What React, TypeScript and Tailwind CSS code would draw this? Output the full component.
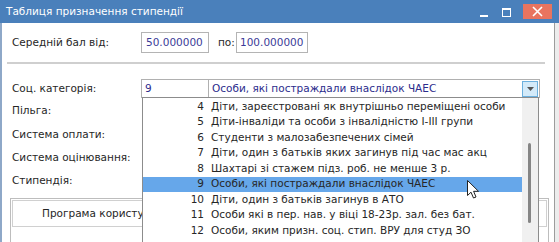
import React from "react";

const items: [string, string][] = [
  ["4", "Діти, зареєстровані як внутрішньо переміщені особи"],
  ["5", "Діти-інваліди та особи з інвалідністю І-ІІІ групи"],
  ["6", "Студенти з малозабезпечених сімей"],
  ["7", "Діти, один з батьків яких загинув під час мас акц"],
  ["8", "Шахтарі зі стажем підз. роб. не менше 3 р."],
  ["9", "Особи, які постраждали внаслідок ЧАЕС"],
  ["10", "Діти, один з батьків загинув в АТО"],
  ["11", "Особи які в пер. нав. у віці 18-23р. зал. без бат."],
  ["12", "Особи, яким призн. соц. стип. ВРУ для студ ЗО"],
];

export default function App() {
  return (
    <div
      className="relative w-[559px] h-[242px] overflow-hidden bg-white text-[10.5px] text-[#262626]"
      style={{ fontFamily: '"DejaVu Sans", Verdana, sans-serif' }}
    >
      {/* Title bar */}
      <div className="flex h-[23px] items-center bg-[#4a80bb] pl-[6px] text-white">
        <span className="flex-1 text-[10.5px]">Таблиця призначення стипендії</span>
        <div className="flex h-full items-start">
          <div className="mt-[15px] h-[2px] w-[8px] bg-white" />
          <div className="ml-[14px] mt-[8px] h-[9px] w-[9px] border-[1.5px] border-t-[2px] border-white" />
          <div className="ml-[12px] mt-[4px] flex h-[15px] w-[29px] items-center justify-center bg-[#e8745f]">
            <svg width="11" height="11" viewBox="0 0 11 11">
              <path d="M1 1 L10 10 M10 1 L1 10" stroke="white" strokeWidth="1.6" />
            </svg>
          </div>
          <div className="w-[7px]" />
        </div>
      </div>

      {/* Window body */}
      <div className="flex h-[219px]">
        <div className="w-[2px] bg-[#8ea8c8]" />
        <div className="relative flex-1 border-r border-[#9c9c9c]">
          {/* Row 1 */}
          <div className="mt-[9px] flex h-[21px] items-center pl-[10px]">
            <span className="w-[129px]">Середній бал від:</span>
            <div className="flex h-[21px] w-[68px] items-center border border-[#b4b4b4] pl-[4px] text-[#3b3b98]">
              50.000000
            </div>
            <span className="ml-[9px] w-[17px] whitespace-nowrap">по:</span>
            <div className="ml-[1px] flex h-[21px] w-[72px] items-center overflow-hidden whitespace-nowrap border border-[#b4b4b4] pl-[3px] text-[#3b3b98]">
              100.000000
            </div>
          </div>

          {/* Separator */}
          <div className="ml-[5px] mt-[9px] h-[2px] w-[538px] bg-[#cfcfcf]" />

          {/* Soc category */}
          <div className="mt-[15px] flex h-[19px] items-center pl-[10px]">
            <span className="w-[129px]">Соц. категорія:</span>
            <div className="flex h-[19px] w-[68px] items-center border border-[#b0b0b0] pl-[3px] text-[#2c2c8c]">
              9
            </div>
            <div className="-ml-px flex h-[19px] w-[332px] items-center border border-[#b0b0b0] pl-[3px] text-[#2c2c8c]">
              <span className="flex-1">Особи, які постраждали внаслідок ЧАЕС</span>
              <div className="mr-px flex h-[16px] w-[16px] items-center justify-center border border-[#6cb0de] bg-[#d3eaf9]">
                <svg width="7" height="4" viewBox="0 0 7 4">
                  <path d="M0 0 L7 0 L3.5 4 Z" fill="#555" />
                </svg>
              </div>
            </div>
          </div>

          <div className="flex flex-col pl-[10px]">
            <div className="mt-[3px] flex h-[20px] items-center">Пільга:</div>
            <div className="mt-[4px] flex h-[20px] items-center">Система оплати:</div>
            <div className="mt-[3px] flex h-[20px] items-center">Система оцінювання:</div>
            <div className="mt-[3px] flex h-[20px] items-center">Стипендія:</div>
          </div>

          {/* Table box */}
          <div className="ml-[8px] mt-[7px] h-[60px] w-[539px] border border-[#bdbdbd] p-px">
            <div className="flex h-[27px] items-center border border-[#d0d0d0] pl-[29px]">
              Програма користувача
            </div>
          </div>
        </div>
        <div className="w-[4px] bg-[#ececec]" />
      </div>

      {/* Dropdown list (overlay) */}
      <div className="absolute left-[142px] top-[97px] flex h-[150px] w-[397px] border border-[#8c8c8c] bg-white">
        <div className="flex-1 pt-[1px]">
          {items.map(([n, t]) => {
            const sel = n === "9";
            return (
              <div
                key={n}
                className={
                  sel
                    ? "flex h-[15.5px] items-center whitespace-nowrap bg-[#66a7ea]"
                    : "flex h-[15.5px] items-center whitespace-nowrap"
                }
              >
                <span className="w-[61px] text-right">{n}</span>
                <span className="ml-[7px]">{t}</span>
              </div>
            );
          })}
        </div>
        <div className="relative w-[16px] bg-[#f0f0f0]">
          <div className="absolute left-[6px] top-[45px] h-[80px] w-[3px] rounded-full bg-[#858585]" />
        </div>
      </div>

      {/* Mouse cursor */}
      <svg
        className="absolute left-[467px] top-[180px]"
        width="13"
        height="19"
        viewBox="0 0 13 19"
      >
        <path
          d="M0.5 0.5 L0.5 15.5 L4 12.2 L6.5 18 L9 17 L6.6 11.3 L11.5 11.3 Z"
          fill="white"
          stroke="#222"
          strokeWidth="1"
          strokeLinejoin="round"
        />
      </svg>
    </div>
  );
}
